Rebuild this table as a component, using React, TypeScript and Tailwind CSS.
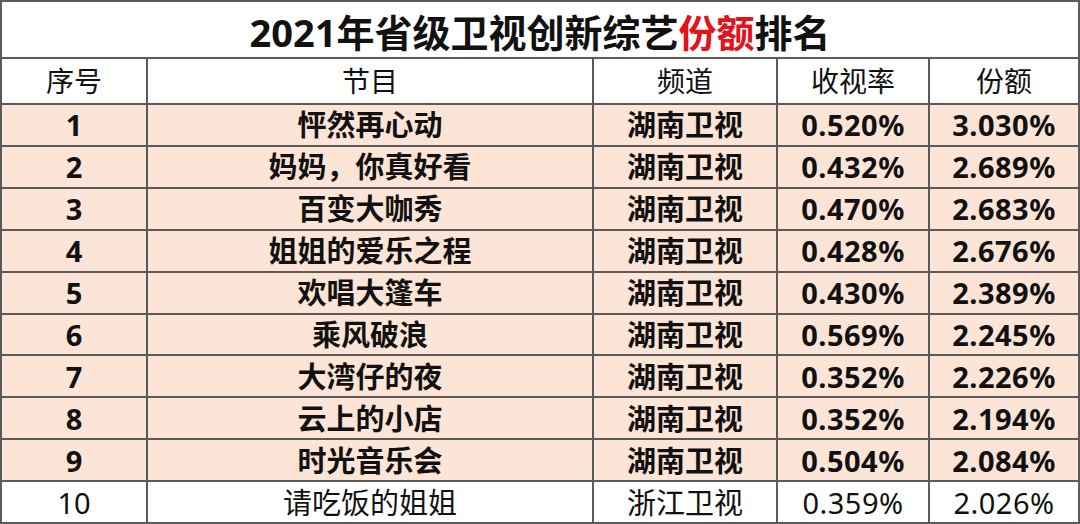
import React from 'react';

type Row = { rank: string; show: string; channel: string; rating: string; share: string; hot: boolean };

const ROWS: Row[] = [
  { rank: '1', show: '怦然再心动', channel: '湖南卫视', rating: '0.520%', share: '3.030%', hot: true },
  { rank: '2', show: '妈妈，你真好看', channel: '湖南卫视', rating: '0.432%', share: '2.689%', hot: true },
  { rank: '3', show: '百变大咖秀', channel: '湖南卫视', rating: '0.470%', share: '2.683%', hot: true },
  { rank: '4', show: '姐姐的爱乐之程', channel: '湖南卫视', rating: '0.428%', share: '2.676%', hot: true },
  { rank: '5', show: '欢唱大篷车', channel: '湖南卫视', rating: '0.430%', share: '2.389%', hot: true },
  { rank: '6', show: '乘风破浪', channel: '湖南卫视', rating: '0.569%', share: '2.245%', hot: true },
  { rank: '7', show: '大湾仔的夜', channel: '湖南卫视', rating: '0.352%', share: '2.226%', hot: true },
  { rank: '8', show: '云上的小店', channel: '湖南卫视', rating: '0.352%', share: '2.194%', hot: true },
  { rank: '9', show: '时光音乐会', channel: '湖南卫视', rating: '0.504%', share: '2.084%', hot: true },
  { rank: '10', show: '请吃饭的姐姐', channel: '浙江卫视', rating: '0.359%', share: '2.026%', hot: false },
];

const font = { fontFamily: '"Noto Sans", "Noto Sans CJK SC", sans-serif' };

const cols = 'grid grid-cols-[146px_446px_184px_152px_1fr]';
const cell = 'flex items-center justify-center border-r-2 border-[#5a5a5a] last:border-r-0 leading-none';

export default function App() {
  return (
    <div className="w-[1080px] h-[524px] bg-white text-[#111]" style={font}>
      <div className="h-full border-2 border-[#5a5a5a] flex flex-col">
        <div className="h-[57px] flex items-center justify-center border-b-2 border-[#5a5a5a] pt-1">
          <h1 className="text-[38px] font-bold leading-none">
            2021年省级卫视创新综艺<span className="text-[#e3131b]">份额</span>排名
          </h1>
        </div>
        <div className={`${cols} h-[46px] border-b-2 border-[#5a5a5a] text-[28px]`}>
          <div className={cell}>序号</div>
          <div className={cell}>节目</div>
          <div className={cell}>频道</div>
          <div className={cell}>收视率</div>
          <div className={cell}>份额</div>
        </div>
        {ROWS.map((r) => (
          <div
            key={r.rank}
            className={`${cols} flex-1 border-b-2 border-[#5a5a5a] last:border-b-0 text-[29px] ${
              r.hot ? 'bg-[#fce4d6] font-bold' : 'bg-white font-normal'
            }`}
          >
            <div className={cell}>{r.rank}</div>
            <div className={cell}>{r.show}</div>
            <div className={cell}>{r.channel}</div>
            <div className={`${cell} tracking-[0.5px]`}>{r.rating}</div>
            <div className={`${cell} tracking-[0.5px]`}>{r.share}</div>
          </div>
        ))}
      </div>
    </div>
  );
}
